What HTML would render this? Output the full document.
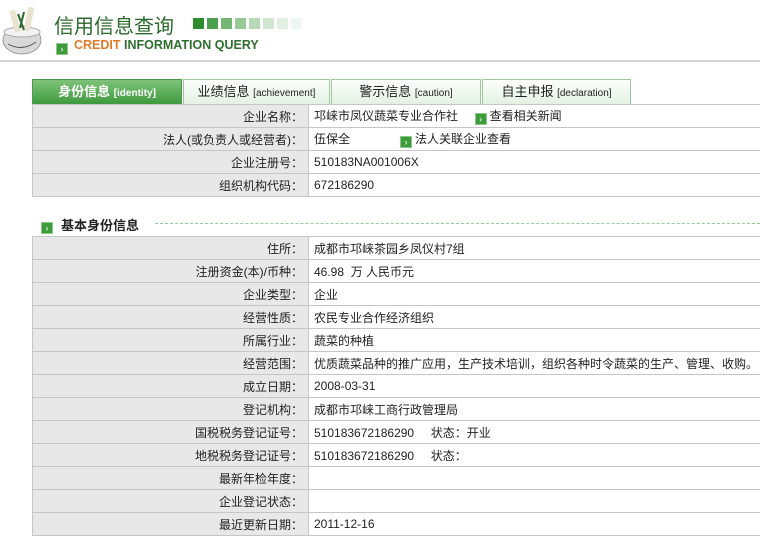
<!DOCTYPE html>
<html><head><meta charset="utf-8"><style>
*{margin:0;padding:0;box-sizing:border-box}
body{width:760px;height:537px;overflow:hidden;background:#fff;font-family:"Liberation Sans","Noto Sans CJK SC",sans-serif;font-size:12px;color:#222;position:relative}
.abs{position:absolute}
.title{left:54px;top:10px;font-size:20px;color:#2a6a2a;letter-spacing:0px}
.sub{left:74px;top:38px;font-size:12.5px;font-weight:bold;color:#2f6e2f}
.sub b{color:#e07a2a}
.tab{top:79px;height:25px;border:1px solid #9cc79c;border-bottom:none;background:linear-gradient(#fbfefb,#e4f2e2);text-align:center;line-height:24px;font-size:13px;color:#222}
.tab small{font-size:10px}
.tab.on{background:linear-gradient(#7fc37a,#3d9a3d);color:#fff;font-weight:bold;border-color:#4a9a4a}
table{position:absolute;left:32px;border-collapse:collapse;width:740px}
td{height:23px;border:1px solid #c6c6c6;padding:0 5px;white-space:nowrap}
td.l{width:276px;background:#e8e8e8;text-align:right}
.ic{display:inline-block;width:12px;height:12px;background:#3e9b3a;border:1px solid #8cc88a;color:#fff;font-size:9px;line-height:10px;text-align:center;vertical-align:-2px;margin-right:3px}
</style></head><body>
<svg class="abs" style="left:2px;top:4px" width="44" height="52"><ellipse cx="20" cy="36" rx="19" ry="14" fill="#d9d9d9" stroke="#999"/><ellipse cx="20" cy="28" rx="18" ry="5" fill="#f2f2f2" stroke="#aaa"/><rect x="10" y="6" width="6" height="22" fill="#e8e4d0" transform="rotate(-15 13 17)"/><rect x="24" y="3" width="6" height="24" fill="#e8e4d0" transform="rotate(12 27 15)"/><path d="M16 10 L22 26 M22 8 L18 24" stroke="#2e6b2e" stroke-width="2"/><path d="M6 40 Q20 48 34 38" stroke="#555" fill="none"/></svg>
<div class="abs title">信用信息查询</div>
<div class="abs" style="left:193px;top:18px;display:flex;gap:3px">
<div style="width:11px;height:11px;background:#2e8b2e"></div><div style="width:11px;height:11px;background:#4ba04b"></div><div style="width:11px;height:11px;background:#74b774"></div><div style="width:11px;height:11px;background:#97c997"></div><div style="width:11px;height:11px;background:#b6d9b6"></div><div style="width:11px;height:11px;background:#cfe6cf"></div><div style="width:11px;height:11px;background:#e2efe2"></div><div style="width:11px;height:11px;background:#eff6ef"></div></div>
<div class="abs" style="left:56px;top:39px"><span class="ic">›</span></div>
<div class="abs sub"><b>CREDIT</b> INFORMATION QUERY</div>
<div class="abs" style="left:0;top:60px;width:760px;height:2px;background:#d4d4d4"></div>
<div class="abs tab on" style="left:32px;width:150px">身份信息 <small>[identity]</small></div>
<div class="abs tab" style="left:183px;width:147px">业绩信息 <small>[achievement]</small></div>
<div class="abs tab" style="left:331px;width:150px">警示信息 <small>[caution]</small></div>
<div class="abs tab" style="left:482px;width:149px">自主申报 <small>[declaration]</small></div>
<table style="top:104px">
<tr><td class="l">企业名称：</td><td>邛崃市凤仪蔬菜专业合作社 &nbsp; &nbsp; <span class="ic">›</span>查看相关新闻</td></tr>
<tr><td class="l">法人(或负责人或经营者)：</td><td>伍保全 &nbsp; &nbsp; &nbsp; &nbsp; &nbsp; &nbsp; &nbsp; <span class="ic">›</span>法人关联企业查看</td></tr>
<tr><td class="l">企业注册号：</td><td>510183NA001006X</td></tr>
<tr><td class="l">组织机构代码：</td><td>672186290</td></tr>
</table>
<div class="abs" style="left:41px;top:218px"><span class="ic">›</span></div>
<div class="abs" style="left:61px;top:215px;font-size:13px;font-weight:bold">基本身份信息</div>
<div class="abs" style="left:155px;top:223px;width:605px;border-top:1px dashed #9cc79c"></div>
<table style="top:236px">
<tr><td class="l">住所：</td><td>成都市邛崃茶园乡凤仪村7组</td></tr>
<tr><td class="l">注册资金(本)/币种：</td><td>46.98 &nbsp;万 人民币元</td></tr>
<tr><td class="l">企业类型：</td><td>企业</td></tr>
<tr><td class="l">经营性质：</td><td>农民专业合作经济组织</td></tr>
<tr><td class="l">所属行业：</td><td>蔬菜的种植</td></tr>
<tr><td class="l">经营范围：</td><td>优质蔬菜品种的推广应用，生产技术培训，组织各种时令蔬菜的生产、管理、收购。</td></tr>
<tr><td class="l">成立日期：</td><td>2008-03-31</td></tr>
<tr><td class="l">登记机构：</td><td>成都市邛崃工商行政管理局</td></tr>
<tr><td class="l">国税税务登记证号：</td><td>510183672186290 &nbsp; &nbsp; 状态：开业</td></tr>
<tr><td class="l">地税税务登记证号：</td><td>510183672186290 &nbsp; &nbsp; 状态：</td></tr>
<tr><td class="l">最新年检年度：</td><td></td></tr>
<tr><td class="l">企业登记状态：</td><td></td></tr>
<tr><td class="l">最近更新日期：</td><td>2011-12-16</td></tr>
</table>
</body></html>
